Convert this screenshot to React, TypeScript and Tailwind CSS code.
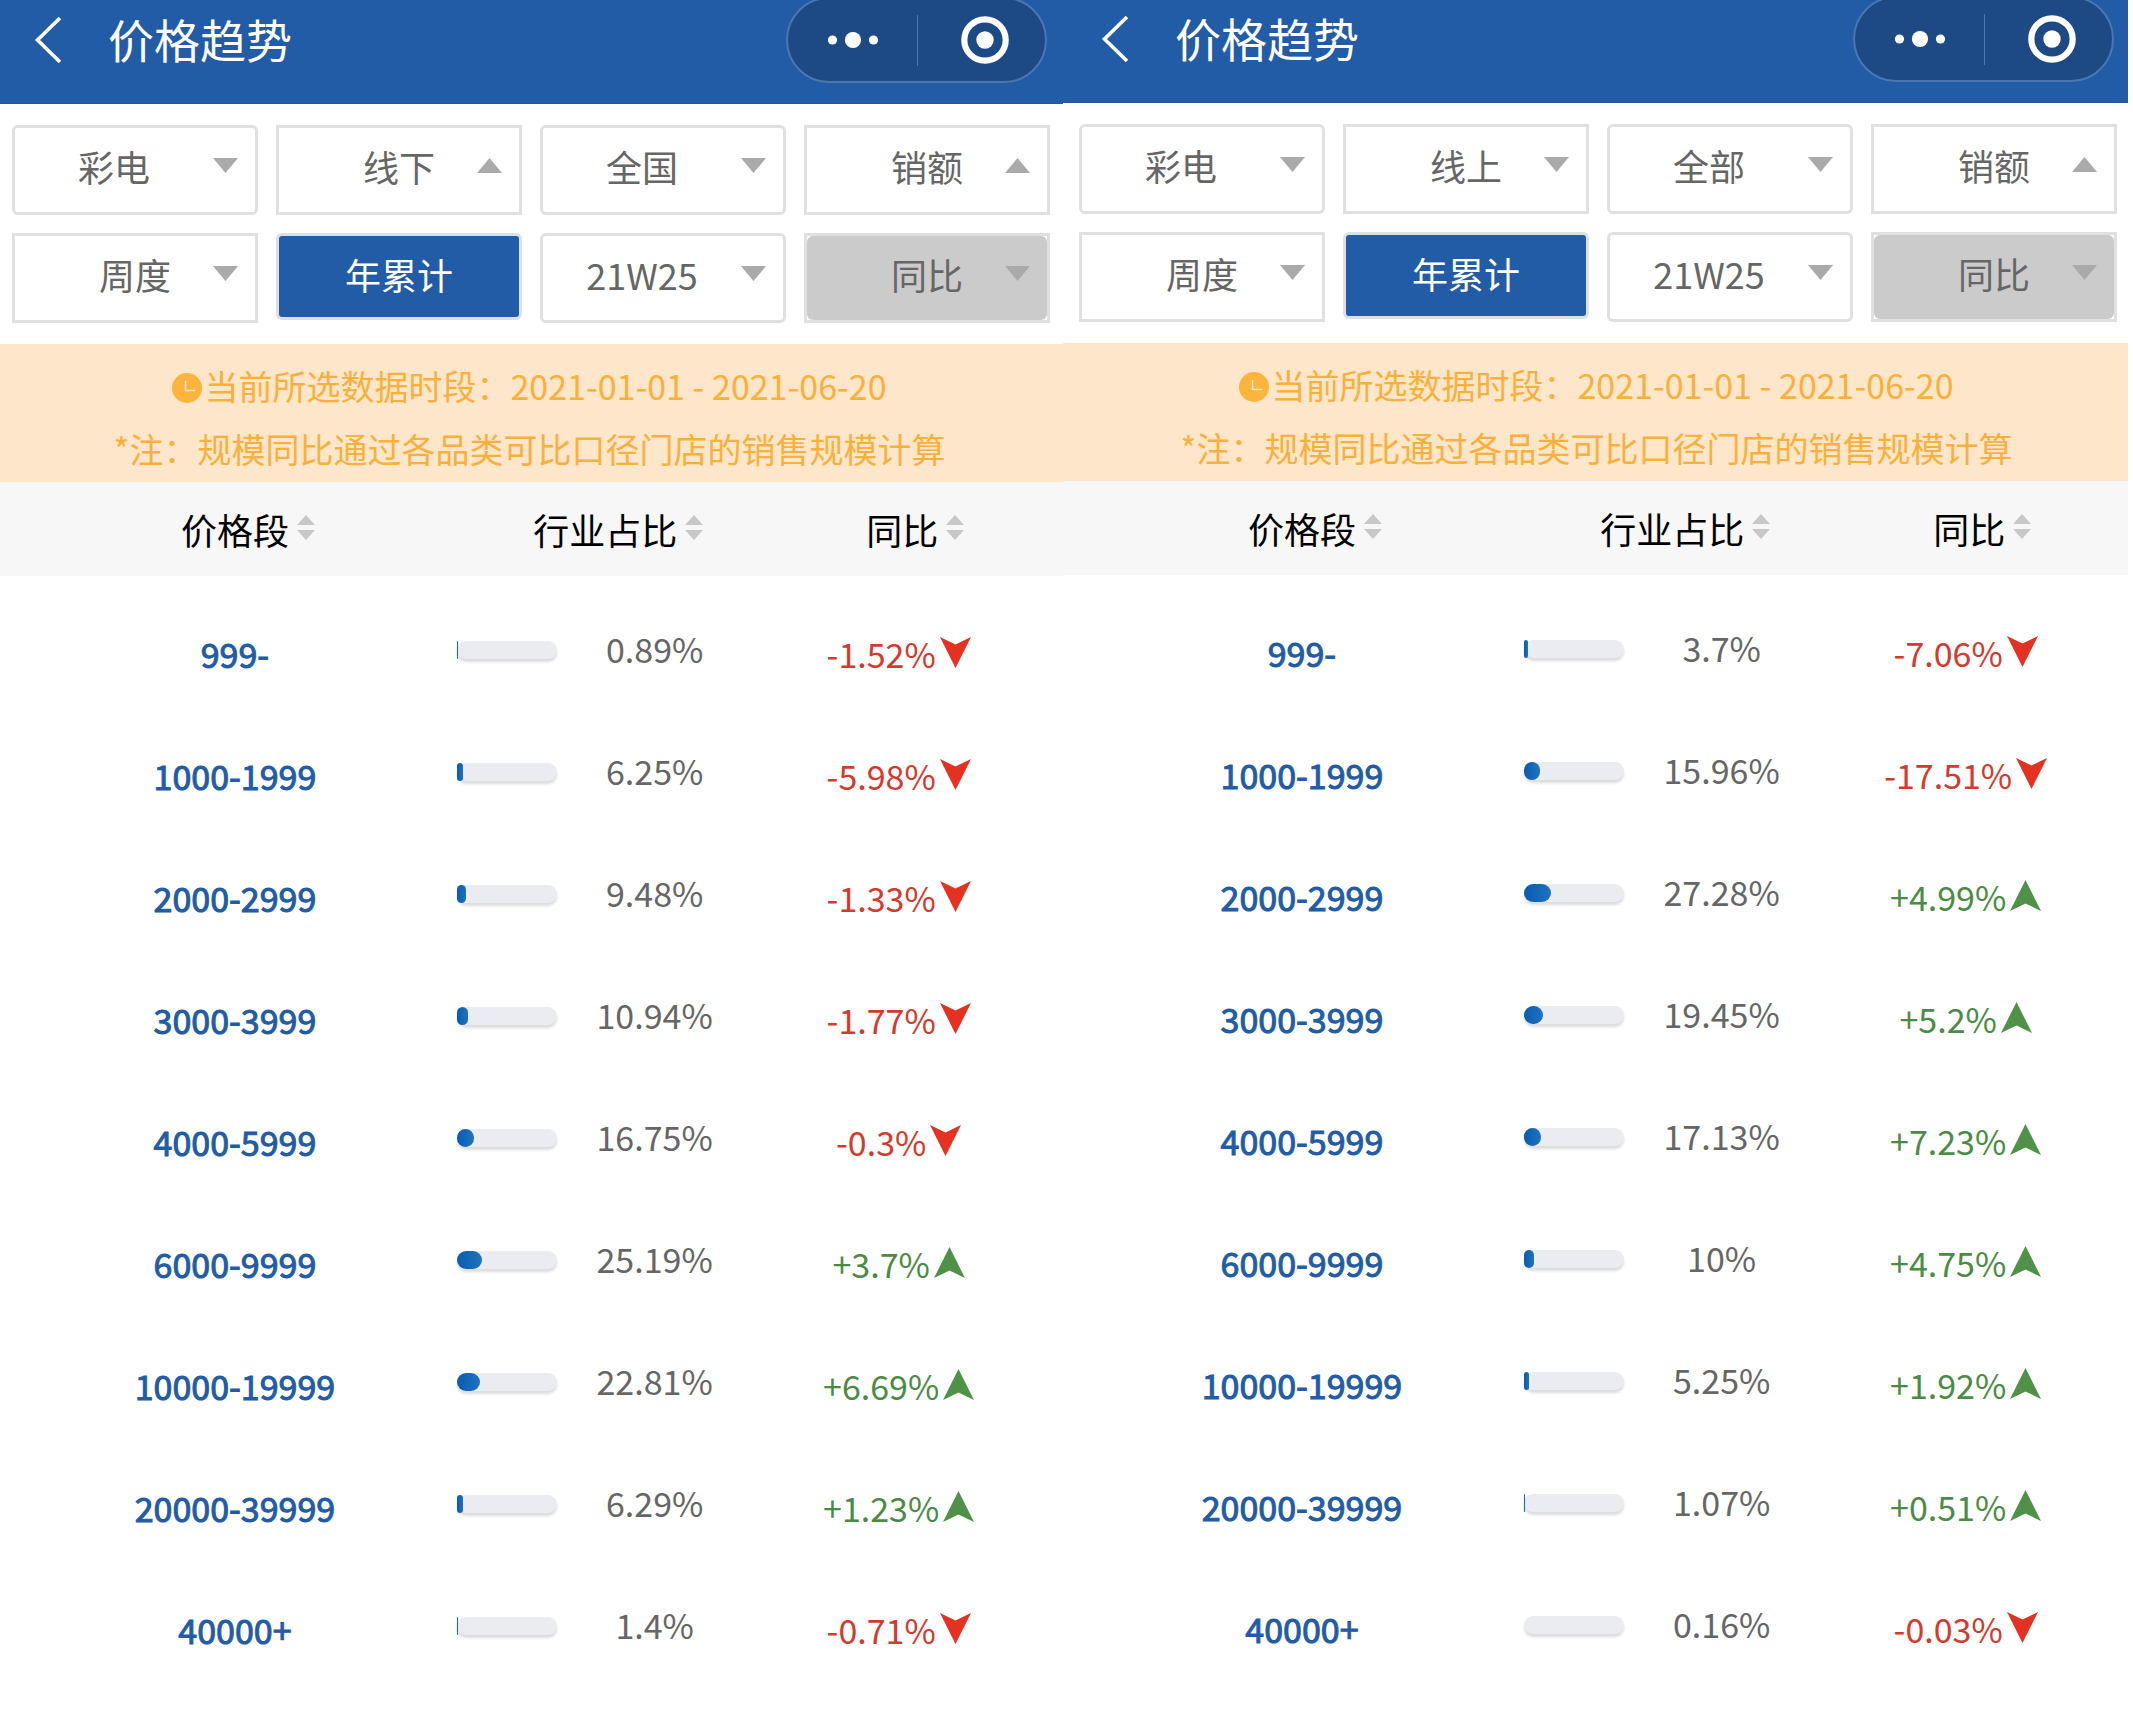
import React from "react";

type Row = { range: string; share: number; change: number };

type Filter = {
  id: string;
  label: string;
  value: string;
  arrow: "up" | "down";
  rounded?: boolean;
  disabled?: boolean;
};

type PanelData = { id: string; top: Filter[]; rows: Row[] };

const PANELS: PanelData[] = [
  {
    id: "offline",
    top: [
      { id: "category", label: "品类", value: "彩电", arrow: "down", rounded: true },
      { id: "channel", label: "渠道", value: "线下", arrow: "up" },
      { id: "region", label: "区域", value: "全国", arrow: "down", rounded: true },
      { id: "metric", label: "指标", value: "销额", arrow: "up" },
    ],
    rows: [
      { range: "999-", share: 0.89, change: -1.52 },
      { range: "1000-1999", share: 6.25, change: -5.98 },
      { range: "2000-2999", share: 9.48, change: -1.33 },
      { range: "3000-3999", share: 10.94, change: -1.77 },
      { range: "4000-5999", share: 16.75, change: -0.3 },
      { range: "6000-9999", share: 25.19, change: 3.7 },
      { range: "10000-19999", share: 22.81, change: 6.69 },
      { range: "20000-39999", share: 6.29, change: 1.23 },
      { range: "40000+", share: 1.4, change: -0.71 },
    ],
  },
  {
    id: "online",
    top: [
      { id: "category", label: "品类", value: "彩电", arrow: "down", rounded: true },
      { id: "channel", label: "渠道", value: "线上", arrow: "down" },
      { id: "region", label: "区域", value: "全部", arrow: "down", rounded: true },
      { id: "metric", label: "指标", value: "销额", arrow: "up" },
    ],
    rows: [
      { range: "999-", share: 3.7, change: -7.06 },
      { range: "1000-1999", share: 15.96, change: -17.51 },
      { range: "2000-2999", share: 27.28, change: 4.99 },
      { range: "3000-3999", share: 19.45, change: 5.2 },
      { range: "4000-5999", share: 17.13, change: 7.23 },
      { range: "6000-9999", share: 10, change: 4.75 },
      { range: "10000-19999", share: 5.25, change: 1.92 },
      { range: "20000-39999", share: 1.07, change: 0.51 },
      { range: "40000+", share: 0.16, change: -0.03 },
    ],
  },
];

function Header() {
  return (
    <header className="flex h-[104px] items-start border-b border-[#2a5590] bg-[#225ca6] pr-4 pl-9 text-white">
      <button type="button" aria-label="返回" className="mt-3 h-14 w-9">
        <svg viewBox="0 0 36 56" className="h-14 w-9" fill="none" stroke="currentColor" strokeWidth="3.6">
          <path d="M28 6 5.5 28 28 50" />
        </svg>
      </button>
      <h1 className="ml-10 text-[46px] leading-[76px]">价格趋势</h1>
      <div className="-mt-[3px] ml-auto flex h-[86px] w-[261px] items-center rounded-full border-2 border-[#4a76b1] bg-[#1d4a84]">
        <button type="button" aria-label="更多" className="flex h-full w-[129px] items-center justify-center">
          <svg viewBox="0 0 52 20" className="h-5 w-[52px]" fill="currentColor">
            <circle cx="5.5" cy="10" r="4.6" />
            <circle cx="26" cy="10" r="8.1" />
            <circle cx="46.5" cy="10" r="4.6" />
          </svg>
        </button>
        <span className="h-[51px] w-px bg-[#4a76b1]" />
        <button type="button" aria-label="关闭" className="flex h-full flex-1 items-center justify-center pl-[6px]">
          <svg viewBox="0 0 48 48" className="size-12">
            <circle cx="24" cy="24" r="20.7" fill="none" stroke="currentColor" strokeWidth="6.2" />
            <circle cx="24" cy="24" r="8.7" fill="currentColor" />
          </svg>
        </button>
      </div>
    </header>
  );
}

function Triangle({ up, className }: { up: boolean; className: string }) {
  return (
    <svg viewBox="0 0 25 15" preserveAspectRatio="none" className={className} fill="currentColor" aria-hidden="true">
      <path d={up ? "M0 15 12.5 0 25 15Z" : "M0 0H25L12.5 15Z"} />
    </svg>
  );
}

function FilterSelect({ filter }: { filter: Filter }) {
  return (
    <div
      className={`relative h-[90px] border-[3px] border-[#e0e0e0] bg-white ${filter.rounded ? "rounded-[6px]" : ""}`}
    >
      <select
        aria-label={filter.label}
        disabled={filter.disabled}
        className={`block h-full w-full appearance-none pb-2 text-center text-[36px] text-[#666] opacity-100 [text-align-last:center] ${
          filter.rounded ? "pr-[42px]" : ""
        } ${filter.disabled ? "rounded-[6px] bg-[#cbcbcb]" : "bg-transparent"}`}
      >
        <option>{filter.value}</option>
      </select>
      <Triangle
        up={filter.arrow === "up"}
        className="pointer-events-none absolute top-[30px] right-[17px] h-[15px] w-[25px] text-[#aaa]"
      />
    </div>
  );
}

function SortHead({ title, className }: { title: string; className: string }) {
  return (
    <th scope="col" className={`p-0 font-normal ${className}`}>
      <button type="button" className="relative leading-[54px]">
        {title}
        <span className="absolute top-[13px] left-full ml-2 flex flex-col gap-[5px] text-[#c8c8c8]">
          <Triangle up className="h-[10px] w-[18px]" />
          <Triangle up={false} className="h-[10px] w-[18px]" />
        </span>
      </button>
    </th>
  );
}

function Change({ value }: { value: number }) {
  const up = value > 0;
  return (
    <span className={up ? "text-[#4b8c44]" : "text-[#d43a2d]"}>
      {up ? `+${value}%` : `${value}%`}
      <svg
        viewBox="0 0 31 31"
        className={`ml-1 inline-block size-[31px] align-baseline ${up ? "text-[#4f9147]" : "text-[#e53122]"}`}
        fill="currentColor"
        aria-hidden="true"
      >
        <path d={up ? "M15.5 0 31 31 15.5 23.5 0 31Z" : "M0 0 15.5 7.5 31 0 15.5 31Z"} />
      </svg>
    </span>
  );
}

function ShareBar({ share }: { share: number }) {
  return (
    <div className="h-[18px] w-[100px] rounded-[9px] bg-[#ebecf1] shadow-[0_3px_3px_rgba(0,0,0,0.14)]">
      {share >= 0.5 && (
        <div
          className="h-full rounded-[9px] bg-linear-to-r from-[#085cae] to-[#1f72c2]"
          style={{ width: `${share}%` }}
        />
      )}
    </div>
  );
}

function PriceTable({ rows }: { rows: Row[] }) {
  return (
    <table className="w-full table-fixed border-collapse text-center">
      <thead className="bg-[#f7f7f7] text-[36px] text-black">
        <tr className="h-[94px]">
          <SortHead title="价格段" className="w-[43.2%] pl-[17px]" />
          <SortHead title="行业占比" className="w-[26%] pl-[19px]" />
          <SortHead title="同比" className="pl-[7px]" />
        </tr>
      </thead>
      <tbody className="text-[34px] leading-[50px] before:block before:h-[13px] before:content-['']">
        {rows.map((row) => (
          <tr key={row.range} className="h-[122px]">
            <th
              scope="row"
              className="p-0 pt-2 pl-[17px] font-normal text-[#225ca6] [-webkit-text-stroke:1px_#225ca6]"
            >
              {row.range}
            </th>
            <td className="p-0">
              <div className="flex items-center">
                <ShareBar share={row.share} />
                <span className="flex-1 pb-[2px] pl-[18px] text-[#666]">{row.share}%</span>
              </div>
            </td>
            <td className="p-0 pt-2">
              <Change value={row.change} />
            </td>
          </tr>
        ))}
      </tbody>
    </table>
  );
}

function Panel({ data }: { data: PanelData }) {
  return (
    <>
      <Header />
      <div className="grid grid-cols-4 items-start gap-[18px] pt-[21px] pr-[13px] pb-[21px] pl-4">
        {data.top.map((filter) => (
          <FilterSelect key={filter.id} filter={filter} />
        ))}
        <FilterSelect filter={{ id: "period", label: "周期", value: "周度", arrow: "down" }} />
        <button
          type="button"
          className="h-[87px] rounded-[6px] border-[3px] border-[#dde1e7] bg-[#225ca6] pb-[6px] text-[36px] text-white"
        >
          年累计
        </button>
        <FilterSelect filter={{ id: "week", label: "周", value: "21W25", arrow: "down", rounded: true }} />
        <FilterSelect filter={{ id: "compare", label: "对比", value: "同比", arrow: "down", disabled: true }} />
      </div>
      <div className="bg-[#fde6ca] pt-[10px] pb-[2px] text-center text-[34px] leading-[63px] text-[#f9b13c]">
        <p className="flex items-center justify-center">
          <svg viewBox="0 0 30 30" className="mt-1 mr-[2px] size-[30px]" aria-hidden="true">
            <circle cx="15" cy="15" r="15" fill="#fdb43c" />
            <path d="M13.5 8v9.5H23" fill="none" stroke="#fde6ca" strokeWidth="1.6" />
          </svg>
          当前所选数据时段：2021-01-01 - 2021-06-20
        </p>
        <p>*注：规模同比通过各品类可比口径门店的销售规模计算</p>
      </div>
      <PriceTable rows={data.rows} />
    </>
  );
}

export default function App() {
  return (
    <main className="grid min-h-screen grid-cols-[1063fr_1065fr] items-start overflow-hidden bg-white pr-[5px] font-['Noto_Sans_CJK_SC',sans-serif]">
      <section aria-label="线下" className="overflow-hidden">
        <div className="-ml-1">
          <Panel data={PANELS[0]} />
        </div>
      </section>
      <section aria-label="线上" className="overflow-hidden">
        <div className="-mt-px -mr-[2px]">
          <Panel data={PANELS[1]} />
        </div>
      </section>
    </main>
  );
}
